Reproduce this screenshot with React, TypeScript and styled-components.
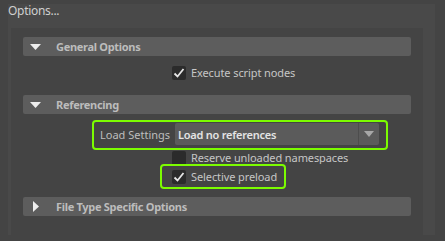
import React from "react";
import styled, { createGlobalStyle } from "styled-components";

const GlobalStyle = createGlobalStyle`
  html, body {
    margin: 0;
    padding: 0;
    background: #444444;
    font-family: "Noto Sans", "Open Sans", sans-serif;
    font-size: 11px;
    color: #c4c4c4;
  }
`;

const Page = styled.div`
  width: 445px;
  height: 241px;
  padding-top: 10px;
  box-sizing: border-box;
  overflow: hidden;
`;

const Frame = styled.div`
  margin-left: 8px;
  width: 427px;
  height: 231px;
  background: #494949;
  padding: 0 12px 0 3px;
  box-sizing: border-box;
`;

const FrameTitle = styled.div`
  margin: -6px 0 0 -3px;
  height: 24px;
  font-size: 12px;
  line-height: 14px;
  letter-spacing: -0.3px;
  color: #cfcfcf;
`;

const Section = styled.div`
  background: #444444;
  height: 213px;
  padding: 9px 12px 0;
  box-sizing: border-box;
  display: flex;
  flex-direction: column;
`;

const Header = styled.div<{ $gap?: number }>`
  height: 19px;
  flex-shrink: 0;
  background: #5d5d5d;
  border-radius: 2px;
  display: flex;
  align-items: center;
  margin-top: ${(p) => p.$gap ?? 0}px;
`;

const Arrow = styled.div`
  width: 25px;
  margin-right: 8px;
  display: flex;
  justify-content: center;
  svg {
    display: block;
  }
`;

const HeaderText = styled.span`
  font-weight: bold;
  color: #bcbcbc;
  font-size: 11px;
  letter-spacing: -0.3px;
`;

const Row = styled.div<{ $gap?: number; $indent?: number }>`
  display: flex;
  align-items: center;
  gap: 5px;
  margin-top: ${(p) => p.$gap ?? 0}px;
  margin-left: ${(p) => p.$indent ?? 149}px;
  height: 14px;
`;

const ClippedRow = styled(Row)`
  height: 13px;
  overflow: hidden;
  align-items: flex-start;
`;

const Box = styled.div`
  width: 14px;
  height: 14px;
  flex-shrink: 0;
  background: #2b2b2b;
  border-radius: 2px;
  display: flex;
  align-items: center;
  justify-content: center;
`;

const Label = styled.span`
  color: #c6c6c6;
  line-height: 14px;
  white-space: nowrap;
  letter-spacing: -0.1px;
`;

const Highlight = styled.div<{ $gap?: number; $indent: number }>`
  align-self: flex-start;
  border: 2px solid #7cfc00;
  border-radius: 4px;
  margin-top: ${(p) => p.$gap ?? 0}px;
  margin-left: ${(p) => p.$indent}px;
  display: flex;
  align-items: center;
`;

const SettingsBox = styled(Highlight)`
  width: 296px;
  height: 30px;
  box-sizing: border-box;
  padding: 1px 7px 3px 6px;
  gap: 5px;
`;

const PreloadBox = styled(Highlight)`
  width: 126px;
  height: 25px;
  box-sizing: border-box;
  padding: 0 0 0 10px;
  gap: 5px;
`;

const SettingLabel = styled.span`
  color: #bdbdbd;
  white-space: nowrap;
`;

const Dropdown = styled.div`
  flex: 1;
  height: 22px;
  background: #5b5b5b;
  border-radius: 2px;
  display: flex;
  align-items: center;
`;

const DropdownValue = styled.span`
  flex: 1;
  padding-left: 3px;
  color: #e4e4e4;
  font-weight: 600;
  letter-spacing: -0.25px;
`;

const DropdownButton = styled.div`
  width: 20px;
  height: 22px;
  border-left: 1px solid #4d4d4d;
  display: flex;
  align-items: center;
  justify-content: center;
`;

const Check = () => (
  <svg width="12" height="12" viewBox="0 0 12 12">
    <path d="M1.5 6.5 L4.5 9.5 L10.5 2" fill="none" stroke="#e6e6e6" strokeWidth="1.8" />
  </svg>
);

const Triangle = ({ open }: { open: boolean }) =>
  open ? (
    <svg width="11" height="6" viewBox="0 0 11 6">
      <polygon points="0,0 11,0 5.5,6" fill="#eeeeee" />
    </svg>
  ) : (
    <svg width="6" height="11" viewBox="0 0 6 11">
      <polygon points="0,0 6,5.5 0,11" fill="#eeeeee" />
    </svg>
  );

const SectionHeader = ({ title, open, gap }: { title: string; open: boolean; gap?: number }) => (
  <Header $gap={gap}>
    <Arrow>
      <Triangle open={open} />
    </Arrow>
    <HeaderText>{title}</HeaderText>
  </Header>
);

export default function App() {
  return (
    <Page>
      <GlobalStyle />
      <Frame>
        <FrameTitle>Options...</FrameTitle>
        <Section>
          <SectionHeader title="General Options" open />
          <Row $gap={10}>
            <Box>
              <Check />
            </Box>
            <Label>Execute script nodes</Label>
          </Row>

          <SectionHeader title="Referencing" open gap={15} />
          <SettingsBox $gap={6} $indent={69}>
            <SettingLabel>Load Settings</SettingLabel>
            <Dropdown>
              <DropdownValue>Load no references</DropdownValue>
              <DropdownButton>
                <svg width="10" height="6" viewBox="0 0 10 6">
                  <polygon points="0,0 10,0 5,6" fill="#a8a8a8" />
                </svg>
              </DropdownButton>
            </Dropdown>
          </SettingsBox>
          <ClippedRow $gap={1}>
            <Box />
            <Label>Reserve unloaded namespaces</Label>
          </ClippedRow>
          <PreloadBox $indent={137}>
            <Box>
              <Check />
            </Box>
            <Label>Selective preload</Label>
          </PreloadBox>

          <SectionHeader title="File Type Specific Options" open={false} gap={8} />
        </Section>
      </Frame>
    </Page>
  );
}
